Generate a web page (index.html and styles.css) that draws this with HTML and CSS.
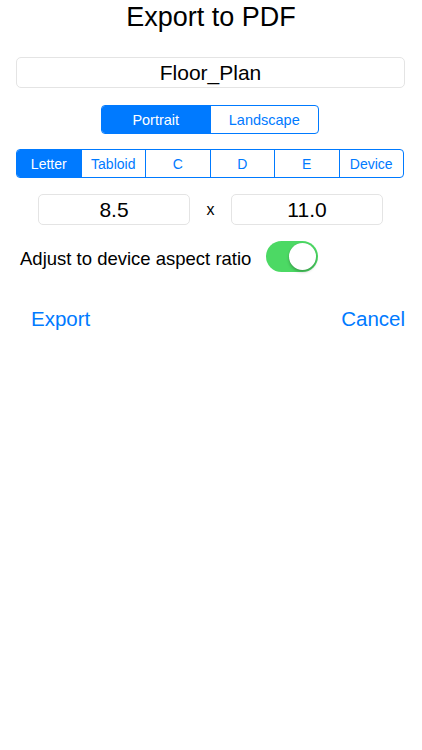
FILE: index.html
```html
<!DOCTYPE html>
<html lang="en">
<head>
<meta charset="utf-8">
<title>Export to PDF</title>
<link rel="stylesheet" href="styles.css">
</head>
<body>
<div class="sheet">
  <h1 class="title">Export to PDF</h1>
  <div class="field filename">Floor_Plan</div>
  <div class="orient-row">
    <div class="segment orient">
      <div class="seg-item active">Portrait</div>
      <div class="seg-item">Landscape</div>
    </div>
  </div>
  <div class="segment sizes">
    <div class="seg-item active">Letter</div>
    <div class="seg-item">Tabloid</div>
    <div class="seg-item">C</div>
    <div class="seg-item">D</div>
    <div class="seg-item">E</div>
    <div class="seg-item">Device</div>
  </div>
  <div class="dims">
    <div class="field dim">8.5</div>
    <div class="times">x</div>
    <div class="field dim">11.0</div>
  </div>
  <div class="toggle-row">
    <span class="toggle-label">Adjust to device aspect ratio</span>
    <div class="switch on"><div class="knob"></div></div>
  </div>
  <div class="actions">
    <span class="action">Export</span>
    <span class="action">Cancel</span>
  </div>
</div>
</body>
</html>
```
FILE: styles.css
```css
* { box-sizing: border-box; }
html, body {
  margin: 0;
  padding: 0;
  background: #ffffff;
}
body {
  font-family: "Liberation Sans", Arial, sans-serif;
  color: #000000;
  width: 422px;
}
.sheet {
  display: flex;
  flex-direction: column;
}
.title {
  margin: 0;
  font-size: 27px;
  font-weight: normal;
  line-height: 34px;
  text-align: center;
}
.field {
  display: flex;
  align-items: center;
  justify-content: center;
  border: 1px solid #e4e4e4;
  border-radius: 5px;
  background: #ffffff;
}
.filename {
  margin: 23px 17px 0 16px;
  height: 31px;
  font-size: 21px;
}
.orient-row {
  display: flex;
  margin-top: 17px;
  padding-left: 101px;
}
.segment {
  display: flex;
  border: 1px solid #007aff;
  border-radius: 4px;
  height: 29px;
  overflow: hidden;
}
.orient {
  width: 218px;
}
.seg-item {
  flex: 1 1 0;
  display: flex;
  align-items: center;
  justify-content: center;
  color: #007aff;
  font-size: 14.5px;
  border-left: 1px solid #007aff;
}
.seg-item:first-child {
  border-left: none;
}
.seg-item.active {
  background: #007aff;
  color: #ffffff;
}
.sizes {
  margin: 15px 18px 0 16px;
}
.sizes .seg-item {
  font-size: 14px;
}
.dims {
  display: flex;
  align-items: center;
  margin-top: 16px;
  padding-left: 38px;
}
.dim {
  width: 152px;
  height: 31px;
  font-size: 21px;
}
.times {
  width: 41px;
  text-align: center;
  font-size: 16px;
}
.toggle-row {
  display: flex;
  align-items: center;
  gap: 15px;
  margin-top: 16px;
  padding-left: 20px;
}
.toggle-label {
  font-size: 18.5px;
  padding-top: 4px;
}
.switch {
  position: relative;
  width: 52px;
  height: 31px;
  border-radius: 16px;
  background: #4cd964;
}
.knob {
  position: absolute;
  top: 2px;
  right: 2px;
  width: 27px;
  height: 27px;
  border-radius: 50%;
  background: #ffffff;
  box-shadow: 0 2px 3px rgba(0, 0, 0, 0.25), 0 0 1px rgba(0, 0, 0, 0.15);
}
.actions {
  display: flex;
  justify-content: space-between;
  margin-top: 35px;
  padding: 0 17px 0 31px;
}
.action {
  color: #007aff;
  font-size: 20.5px;
  line-height: 24px;
}
```
